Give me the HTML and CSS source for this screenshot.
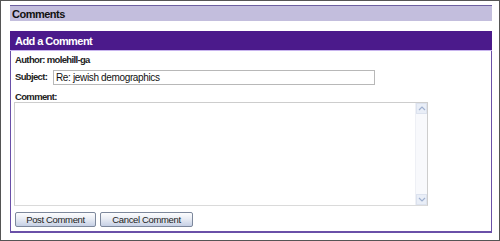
FILE: index.html
```html
<!DOCTYPE html>
<html>
<head>
<meta charset="utf-8">
<link rel="stylesheet" href="styles.css">
</head>
<body>
<div class="frame">
  <div class="section-bar">Comments</div>
  <div class="panel">
    <div class="panel-head">Add a Comment</div>
    <div class="panel-body">
      <div class="author">Author: molehill-ga</div>
      <div class="subject-row">
        <label class="lbl">Subject:</label>
        <input class="subject" type="text" value="Re: jewish demographics">
      </div>
      <div class="lbl comment-lbl">Comment:</div>
      <div class="ta-wrap">
        <textarea class="ta"></textarea>
        <div class="sb">
          <span class="arrow up"><svg width="8" height="5" viewBox="0 0 8 5"><path d="M1 4 L4 1 L7 4" fill="none" stroke="#9fb0d0" stroke-width="1.2"/></svg></span>
          <span class="arrow down"><svg width="8" height="5" viewBox="0 0 8 5"><path d="M1 1 L4 4 L7 1" fill="none" stroke="#9fb0d0" stroke-width="1.2"/></svg></span>
        </div>
      </div>
      <div class="buttons">
        <button class="btn btn-post">Post Comment</button>
        <button class="btn btn-cancel">Cancel Comment</button>
      </div>
    </div>
  </div>
</div>
</body>
</html>
```
FILE: styles.css
```css
html, body {
  margin: 0;
  padding: 0;
  background: #fff;
}
body {
  font-family: Arial, "Liberation Sans", sans-serif;
  color: #000;
}
.frame {
  border: 1px solid #555;
  padding: 4px 7px 0 9px;
  width: 482px;
  height: 235px;
}
.section-bar {
  height: 15px;
  border-top: 1px solid #6d60a0;
  background: #c3bedd;
  font-size: 11px;
  letter-spacing: -0.5px;
  font-weight: bold;
  line-height: 16px;
  padding-left: 2px;
  margin-bottom: 10px;
  color: #111;
}
.panel {
  border: 1px solid #6a50a8;
  border-top: none;
  border-bottom: 2px solid #6a50a8;
  width: 480px;
}
.panel-head {
  background: #4b1a8b;
  color: #fff;
  font-size: 11px;
  letter-spacing: -0.55px;
  font-weight: bold;
  height: 19px;
  line-height: 20px;
  padding-left: 5px;
  border-bottom: 1px solid #c8b4ee;
  margin: 0 -1px;
}
.panel-body {
  padding: 3px 0 4px 3px;
}
.author {
  font-weight: bold;
  font-size: 9.5px;
  letter-spacing: -0.65px;
  height: 12px;
  line-height: 12px;
  color: #222;
  padding-left: 1px;
}
.subject-row {
  display: flex;
  align-items: center;
  margin-top: 4px;
  height: 15px;
}
.lbl {
  font-weight: bold;
  font-size: 9.5px;
  letter-spacing: -0.65px;
  color: #222;
  padding-left: 1px;
}
.subject-row .lbl {
  width: 38px;
  margin-top: -3px;
}
.subject {
  width: 322px;
  height: 15px;
  box-sizing: border-box;
  border: 1px solid #b8b8b8;
  font-family: Arial, "Liberation Sans", sans-serif;
  font-size: 10px;
  letter-spacing: -0.35px;
  padding: 0 2px;
  margin: 0;
  color: #111;
}
.comment-lbl {
  margin-top: 7px;
  height: 10px;
  line-height: 10px;
}
.ta-wrap {
  display: flex;
  width: 414px;
  height: 104px;
  box-sizing: border-box;
  border: 1px solid #cdcdcd;
  border-bottom-color: #dadada;
}
.ta {
  flex: 1;
  border: none;
  resize: none;
  outline: none;
  margin: 0;
  padding: 0;
}
.sb {
  width: 11px;
  background: #f8f9fc;
  border-left: 1px solid #eef0f5;
  display: flex;
  flex-direction: column;
  justify-content: space-between;
  align-items: center;
}
.arrow {
  display: flex;
  align-items: center;
  justify-content: center;
  width: 11px;
  height: 11px;
  background: #e9eef7;
  border: 1px solid #dce2ee;
  box-sizing: border-box;
}
.buttons {
  display: flex;
  gap: 4px;
  margin-top: 6px;
  padding-left: 1px;
}
.btn {
  height: 15px;
  box-sizing: border-box;
  border: 1px solid #7d889c;
  border-radius: 2px;
  background: linear-gradient(#fdfdfe, #e8ecf4 45%, #c6d0e5);
  font-family: Arial, "Liberation Sans", sans-serif;
  font-size: 9.5px;
  letter-spacing: -0.35px;
  line-height: 12px;
  color: #222;
  padding: 0;
  margin: 0;
}
.btn-post { width: 81px; }
.btn-cancel { width: 93px; }
```
